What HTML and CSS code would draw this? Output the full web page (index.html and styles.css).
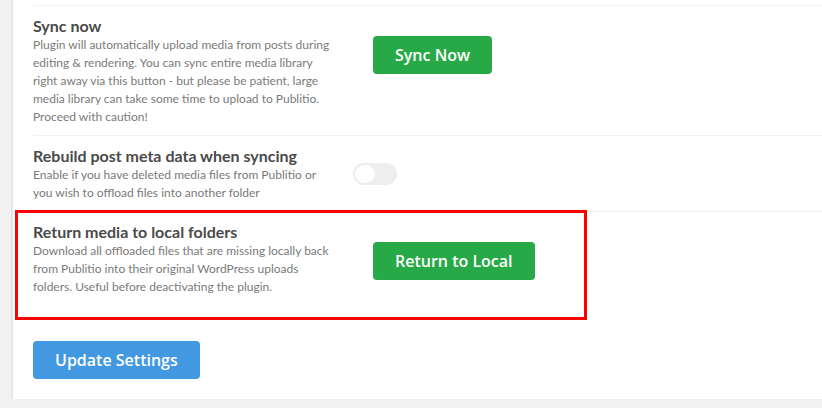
FILE: index.html
```html
<!DOCTYPE html>
<html>
<head>
<meta charset="utf-8">
<link rel="stylesheet" href="styles.css">
</head>
<body>
<div class="card">
  <div class="rows">
    <div class="row">
      <div class="info">
        <div class="title">Sync now</div>
        <div class="desc">Plugin will automatically upload media from posts during editing &amp; rendering. You can sync entire media library right away via this button - but please be patient, large media library can take some time to upload to Publitio. Proceed with caution!</div>
      </div>
      <div class="control">
        <button class="btn btn-green">Sync Now</button>
      </div>
    </div>
    <div class="row">
      <div class="info">
        <div class="title">Rebuild post meta data when syncing</div>
        <div class="desc">Enable if you have deleted media files from Publitio or you wish to offload files into another folder</div>
      </div>
      <div class="control">
        <span class="toggle"><span class="knob"></span></span>
      </div>
    </div>
    <div class="row row-last">
      <div class="info">
        <div class="title">Return media to local folders</div>
        <div class="desc">Download all offloaded files that are missing locally back from Publitio into their original WordPress uploads folders. Useful before deactivating the plugin.</div>
      </div>
      <div class="control">
        <button class="btn btn-green">Return to Local</button>
      </div>
      <div class="highlight"></div>
    </div>
  </div>
  <div class="footer">
    <button class="btn btn-blue">Update Settings</button>
  </div>
</div>
</body>
</html>
```
FILE: styles.css
```css
html, body {
  margin: 0;
  padding: 0;
  background: #f1f1f1;
  font-family: Lato, "Open Sans", "Liberation Sans", sans-serif;
  overflow: hidden;
}
.card {
  margin-left: 12px;
  margin-right: -20px;
  background: #fff;
  border-left: 1px solid #e4e4e4;
  box-shadow: 0 1px 1px rgba(0,0,0,0.25);
  padding: 5px 0 20px 20px;
}
.rows {
  display: flex;
  flex-direction: column;
}
.row {
  display: flex;
  border-top: 1px solid #f2f2f2;
  padding: 10px 0 9px 0;
  position: relative;
}
.info {
  width: 300px;
  flex: none;
}
.title {
  font-size: 16px;
  line-height: 20px;
  font-weight: 700;
  color: #4a4a4a;
}
.desc {
  font-size: 12px;
  line-height: 18px;
  color: #7a7a7a;
}
.control {
  margin-left: 20px;
}
.btn {
  font-family: "Open Sans", Lato, sans-serif;
  border: none;
  border-radius: 4px;
  color: #fff;
  font-size: 16px;
  font-weight: 600;
  height: 38px;
  padding: 0 22px;
  cursor: pointer;
}
.btn-green {
  background: #28a947;
  margin-top: 20px;
  margin-left: 20px;
}
.btn-blue {
  background: #4299e1;
}
.toggle {
  display: block;
  margin-top: 17px;
  width: 44px;
  height: 22px;
  border-radius: 11px;
  background: #eeeeee;
  position: relative;
}
.knob {
  position: absolute;
  left: 2px;
  top: 2px;
  width: 20px;
  height: 18px;
  border-radius: 50%;
  background: #fff;
}
.highlight {
  position: absolute;
  left: -18px;
  top: -2px;
  width: 566px;
  height: 104px;
  border: 3px solid #ff0000;
  pointer-events: none;
}
.footer {
  margin-top: 36px;
}
```
